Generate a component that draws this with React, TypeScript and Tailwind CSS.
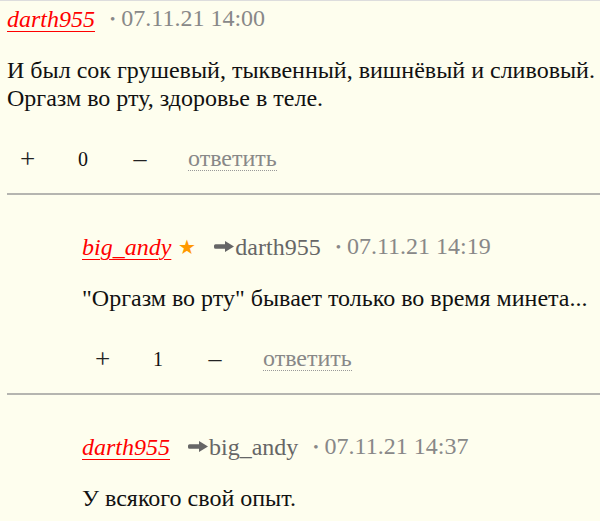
import React from 'react';

type Comment = {
  id: number;
  author: string;
  star?: boolean;
  replyTo?: string;
  date: string;
  lines: string[];
  score?: number;
  nested?: boolean;
  first?: boolean;
  noActions?: boolean;
};

const comments: Comment[] = [
  {
    id: 1,
    author: 'darth955',
    date: '07.11.21 14:00',
    lines: ['И был сок грушевый, тыквенный, вишнёвый и сливовый.', 'Оргазм во рту, здоровье в теле.'],
    score: 0,
    first: true,
  },
  {
    id: 2,
    author: 'big_andy',
    star: true,
    replyTo: 'darth955',
    date: '07.11.21 14:19',
    lines: ['"Оргазм во рту" бывает только во время минета...'],
    score: 1,
    nested: true,
  },
  {
    id: 3,
    author: 'darth955',
    replyTo: 'big_andy',
    date: '07.11.21 14:37',
    lines: ['У всякого свой опыт.'],
    nested: true,
    noActions: true,
  },
];

function ReplyArrow() {
  return (
    <svg width="20" height="11" viewBox="0 0 20 11" className="mr-[1px] inline-block">
      <path d="M1.5 3.2 H11 V0 L20 5.5 L11 11 V7.8 H1.5 Q0 7.8 0 6.3 V4.7 Q0 3.2 1.5 3.2 Z" fill="#666" />
    </svg>
  );
}

function CommentRow({ c }: { c: Comment }) {
  return (
    <div
      className={
        (c.first ? 'pt-[3px] ' : 'pt-[37px] ') +
        (c.noActions ? '' : 'border-b-2 border-[#b5b5b0] pb-[20px]')
      }
    >
      <div className={c.nested ? 'pl-[75px]' : ''}>
        <div className="flex items-center leading-[28px]">
          <a href="#" className="italic text-[#f00] underline decoration-1 underline-offset-[4px]">
            {c.author}
          </a>
          {c.star && <span className="ml-[7px] text-[20px] text-[#f90]">★</span>}
          {c.replyTo && (
            <span className="ml-[18px] flex items-center text-[#666]">
              <ReplyArrow />
              {c.replyTo}
            </span>
          )}
          <span className="ml-[15px] text-[#888]">
            <span className="align-[2px] text-[15px]">•</span> {c.date}
          </span>
        </div>
        <div className="mt-[23px] leading-[28px] text-[#111]">
          {c.lines.map((l, i) => (
            <div key={i}>{l}</div>
          ))}
        </div>
        {!c.noActions && (
          <div className="mt-[33px] flex items-center leading-[28px]">
            <span className="w-[41px] text-center text-[27px] text-[#222]">+</span>
            <span className="w-[70px] text-center text-[20px] text-[#111]">{c.score}</span>
            <span className="w-[44px] text-center text-[26px] text-[#222]">–</span>
            <span className="ml-[26px] border-b border-dotted border-[#999] leading-[23px] text-[#888]">ответить</span>
          </div>
        )}
      </div>
    </div>
  );
}

export default function App() {
  return (
    <div className="h-[521px] w-[600px] overflow-hidden border-t border-[#ddd] bg-[#fefeee] pl-[7px] font-['Liberation_Serif','Times_New_Roman',serif] text-[24px]">
      {comments.map((c) => (
        <CommentRow key={c.id} c={c} />
      ))}
    </div>
  );
}
